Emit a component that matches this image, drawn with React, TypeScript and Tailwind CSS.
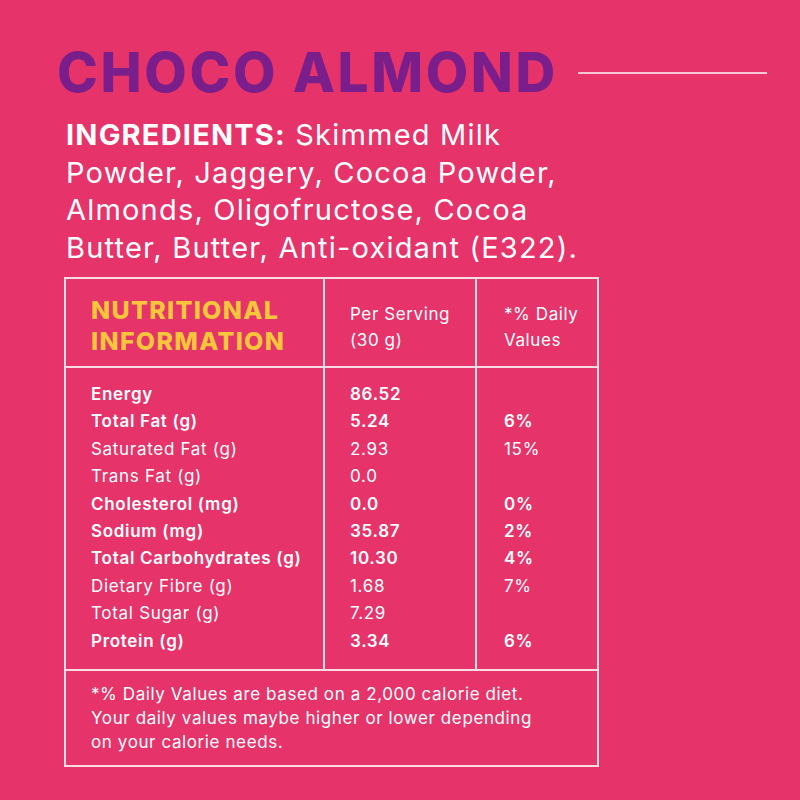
import React from "react";

const rows = [
  { label: "Energy", value: "86.52", pct: "", bold: true },
  { label: "Total Fat (g)", value: "5.24", pct: "6%", bold: true },
  { label: "Saturated Fat (g)", value: "2.93", pct: "15%", bold: false },
  { label: "Trans Fat (g)", value: "0.0", pct: "", bold: false },
  { label: "Cholesterol (mg)", value: "0.0", pct: "0%", bold: true },
  { label: "Sodium (mg)", value: "35.87", pct: "2%", bold: true },
  { label: "Total Carbohydrates (g)", value: "10.30", pct: "4%", bold: true },
  { label: "Dietary Fibre (g)", value: "1.68", pct: "7%", bold: false },
  { label: "Total Sugar (g)", value: "7.29", pct: "", bold: false },
  { label: "Protein (g)", value: "3.34", pct: "6%", bold: true },
];

export default function App() {
  return (
    <div
      className="w-[800px] h-[800px] bg-[#e6336a] text-white overflow-hidden"
      style={{ fontFamily: "Inter, Lato, sans-serif" }}
    >
      {/* TITLE */}
      <div className="flex items-center pt-[40px] pl-[57px] pr-[33px]">
        <h1 className="text-[55px] leading-[64px] font-extrabold text-[#7a1e8c] tracking-[2.6px] whitespace-nowrap">
          CHOCO ALMOND
        </h1>
        <div className="flex-1 h-[2px] bg-[#f6c6d4] ml-[20px] mt-[2px]" />
      </div>

      {/* INGREDIENTS */}
      <p className="pl-[66px] mt-[12px] text-[29px] leading-[37.5px] font-normal tracking-[1.2px] whitespace-nowrap">
        <span className="font-bold">INGREDIENTS:</span> Skimmed Milk
        <br />
        Powder, Jaggery, Cocoa Powder,
        <br />
        Almonds, Oligofructose, Cocoa
        <br />
        Butter, Butter, Anti-oxidant (E322).
      </p>

      {/* TABLE */}
      <div className="ml-[64px] mt-[11px] w-[535px] border-2 border-[#f9dbe4]">
        <div className="grid grid-cols-[259px_152px_1fr] h-[89px] border-b-2 border-[#f9dbe4]">
          <div className="border-r-2 border-[#f9dbe4] pl-[25px] pt-[16px] text-[25px] leading-[31px] font-extrabold text-[#f8c63b] tracking-[1.3px] whitespace-nowrap">
            NUTRITIONAL
            <br />
            INFORMATION
          </div>
          <div className="border-r-2 border-[#f9dbe4] pl-[25px] pt-[22px] text-[17px] leading-[26px] font-normal tracking-[0.6px]">
            Per Serving
            <br />
            (30 g)
          </div>
          <div className="pl-[27px] pt-[22px] text-[17px] leading-[26px] font-normal tracking-[0.6px]">
            *% Daily
            <br />
            Values
          </div>
        </div>

        <div className="grid grid-cols-[259px_152px_1fr] border-b-2 border-[#f9dbe4]">
          <div className="border-r-2 border-[#f9dbe4] pl-[25px] pt-[13px] pb-[14px]">
            {rows.map((r) => (
              <div
                key={r.label}
                className={`h-[27.4px] text-[17px] leading-[27px] tracking-[0.7px] whitespace-nowrap ${r.bold ? "font-semibold" : "font-normal"}`}
              >
                {r.label}
              </div>
            ))}
          </div>
          <div className="border-r-2 border-[#f9dbe4] pl-[25px] pt-[13px] pb-[14px]">
            {rows.map((r) => (
              <div
                key={r.label}
                className={`h-[27.4px] text-[17px] leading-[27px] tracking-[0.7px] ${r.bold ? "font-semibold" : "font-normal"}`}
              >
                {r.value}
              </div>
            ))}
          </div>
          <div className="pl-[27px] pt-[13px] pb-[14px]">
            {rows.map((r) => (
              <div
                key={r.label}
                className={`h-[27.4px] text-[17px] leading-[27px] tracking-[0.7px] ${r.bold ? "font-semibold" : "font-normal"}`}
              >
                {r.pct}
              </div>
            ))}
          </div>
        </div>

        <p className="pl-[25px] pt-[11px] pb-[11px] text-[17px] leading-[24px] font-normal tracking-[0.6px] whitespace-nowrap">
          *% Daily Values are based on a 2,000 calorie diet.
          <br />
          Your daily values maybe higher or lower depending
          <br />
          on your calorie needs.
        </p>
      </div>
    </div>
  );
}
